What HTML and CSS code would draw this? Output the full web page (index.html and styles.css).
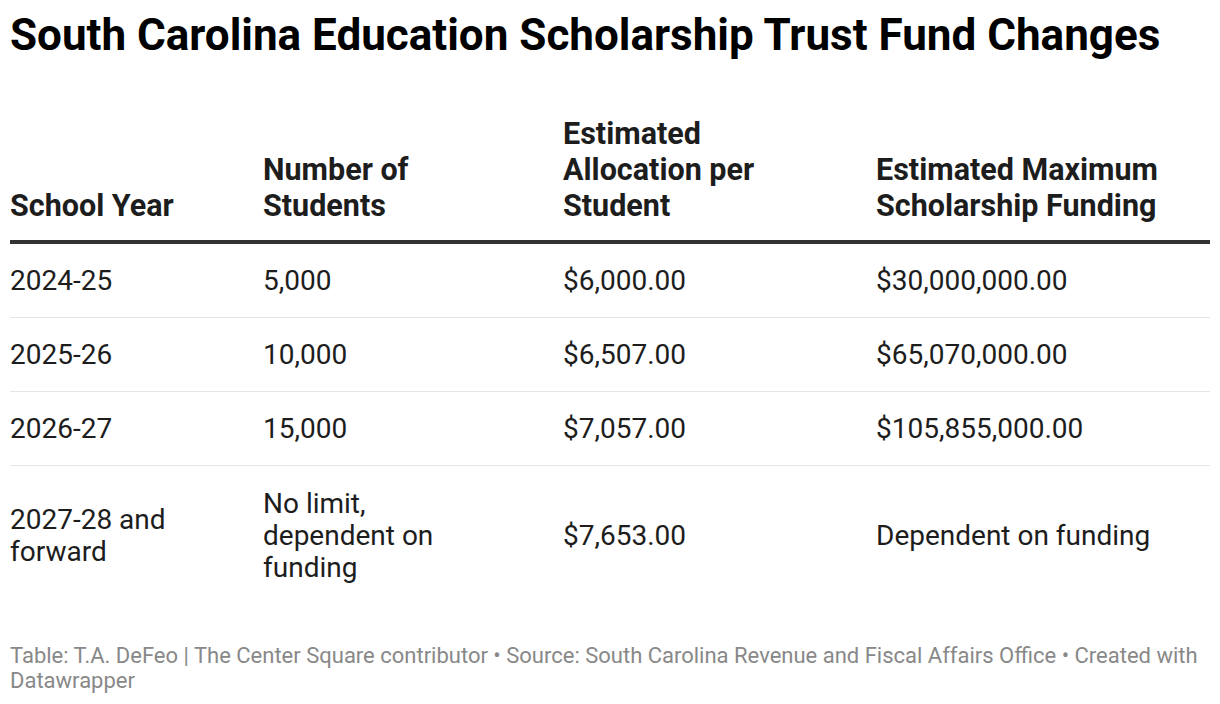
FILE: index.html
```html
<!DOCTYPE html>
<html>
<head>
<meta charset="utf-8">
<link rel="stylesheet" href="styles.css">
</head>
<body>
<div class="chart">
  <h1 class="title">South Carolina Education Scholarship Trust Fund Changes</h1>
  <table class="data">
    <colgroup>
      <col class="c1"><col class="c2"><col class="c3"><col class="c4">
    </colgroup>
    <thead>
      <tr>
        <th>School Year</th>
        <th>Number of<br>Students</th>
        <th>Estimated<br>Allocation per<br>Student</th>
        <th>Estimated Maximum<br>Scholarship Funding</th>
      </tr>
    </thead>
    <tbody>
      <tr><td>2024-25</td><td>5,000</td><td>$6,000.00</td><td>$30,000,000.00</td></tr>
      <tr><td>2025-26</td><td>10,000</td><td>$6,507.00</td><td>$65,070,000.00</td></tr>
      <tr><td>2026-27</td><td>15,000</td><td>$7,057.00</td><td>$105,855,000.00</td></tr>
      <tr class="last"><td>2027-28 and<br>forward</td><td>No limit,<br>dependent on<br>funding</td><td>$7,653.00</td><td>Dependent on funding</td></tr>
    </tbody>
  </table>
  <p class="footer">Table: T.A. DeFeo | The Center Square contributor • Source: South Carolina Revenue and Fiscal Affairs Office • Created with Datawrapper</p>
</div>
</body>
</html>
```
FILE: styles.css
```css
html, body {
  margin: 0;
  padding: 0;
  background: #fff;
}
.chart {
  padding: 11px 10px 0 10px;
  font-family: Roboto, "Liberation Sans", sans-serif;
  color: #1d1d1d;
}
.title {
  margin: 0;
  font-size: 44px;
  line-height: 48px;
  font-weight: 700;
  color: #000;
}
.data {
  margin-top: 57px;
  width: 1200px;
  border-collapse: collapse;
  table-layout: fixed;
}
.c1 { width: 253px; }
.c2 { width: 300px; }
.c3 { width: 313px; }
.c4 { width: 334px; }
.data th {
  text-align: left;
  vertical-align: bottom;
  font-size: 30.5px;
  line-height: 36px;
  font-weight: 700;
  padding: 0 0 16px 0;
  border-bottom: 4px solid #333;
  color: #1d1d1d;
}
.data td {
  font-size: 28px;
  line-height: 32px;
  padding: 21px 0 20px 0;
  border-bottom: 1px solid #e5e5e5;
  vertical-align: middle;
}
.data tr.last td {
  border-bottom: none;
  padding: 22px 0 22px 0;
}
.footer {
  margin: 37px 0 0 0;
  font-size: 22px;
  line-height: 25px;
  color: #888;
}
```
